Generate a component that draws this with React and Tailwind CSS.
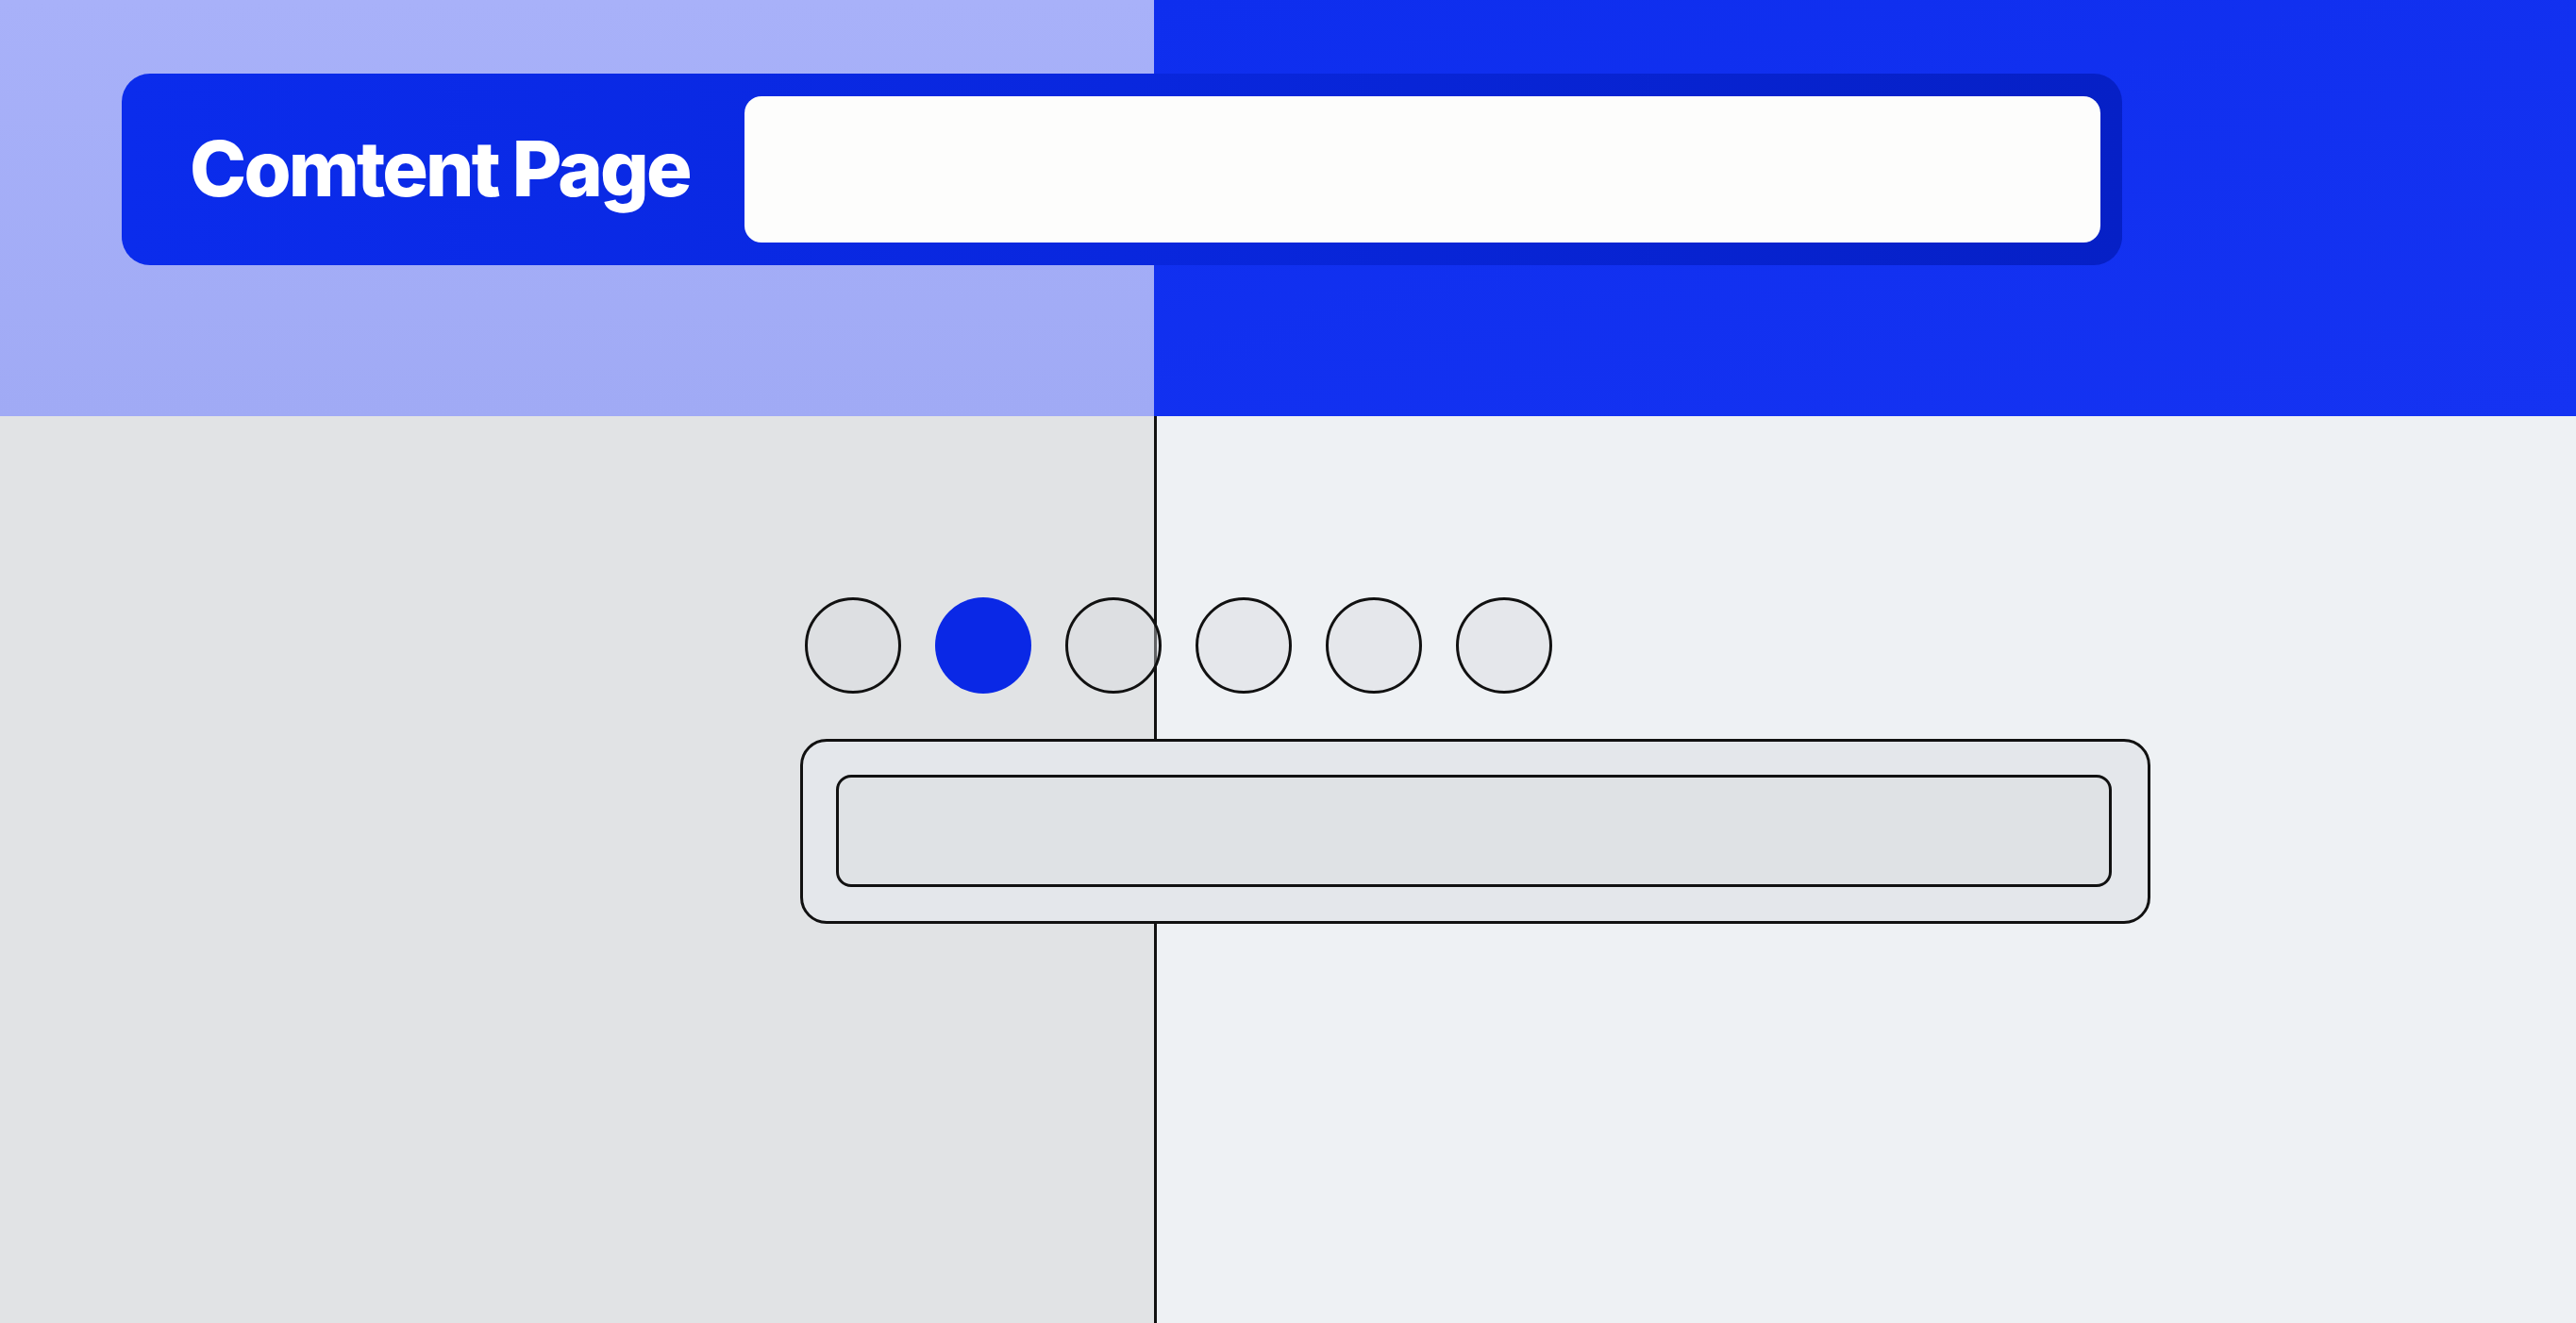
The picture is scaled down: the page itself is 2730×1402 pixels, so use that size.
import React from "react";

const dots = [false, true, false, false, false, false];

export default function App() {
  return (
    <div className="relative h-[1402px] w-full overflow-hidden font-['Inter','Liberation_Sans',sans-serif]">
      {/* page background: four panels split by a thin rule */}
      <div className="grid h-full grid-cols-[1223px_1fr] grid-rows-[441px_1fr]">
        <div className="bg-gradient-to-b from-[#a8b1f9] to-[#a0aaf5]" />
        <div className="bg-gradient-to-br from-[#0e2eee] to-[#1533f2]" />
        <div className="bg-[#e1e3e5]" />
        <div className="border-l-[3px] border-[#111] bg-[#eef1f4]" />
      </div>

      <div className="absolute inset-0 flex flex-col">
        {/* header bar */}
        <div className="ml-[129px] mt-[78px] flex h-[203px] w-[2120px] items-center justify-between rounded-[30px] bg-gradient-to-r from-[#0b2cec] via-[#0927de] to-[#0620c6] pl-[72px] pr-[23px]">
          <h1 className="text-[81px] font-extrabold leading-none tracking-[-0.035em] text-white">
            Comtent Page
          </h1>
          <div className="h-[155px] w-[1437px] rounded-[18px] bg-[#fdfdfc]" />
        </div>

        {/* step dots */}
        <div className="ml-[853px] mt-[352px] flex gap-[36px]">
          {dots.map((on, i) => (
            <div
              key={i}
              className={
                on
                  ? "h-[102px] w-[102px] rounded-full bg-[#0a28e6]"
                  : "h-[102px] w-[102px] rounded-full border-[3px] border-[#111] bg-[#d6dadf]/40"
              }
            />
          ))}
        </div>

        {/* field */}
        <div className="ml-[848px] mt-[48px] flex h-[196px] w-[1431px] rounded-[28px] border-[3px] border-[#111] bg-[#e4e7eb] pb-[36px] pl-[35px] pr-[38px] pt-[35px]">
          <div className="flex-1 rounded-[16px] border-[3px] border-[#111] bg-[#dfe2e5]" />
        </div>
      </div>
    </div>
  );
}
